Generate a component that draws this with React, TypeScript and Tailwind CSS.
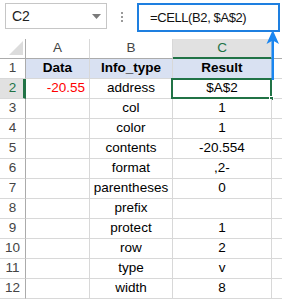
import React from "react";

const data: [string, string, string, string][] = [
  ["1", "Data", "Info_type", "Result"],
  ["2", "-20.55", "address", "$A$2"],
  ["3", "", "col", "1"],
  ["4", "", "color", "1"],
  ["5", "", "contents", "-20.554"],
  ["6", "", "format", ",2-"],
  ["7", "", "parentheses", "0"],
  ["8", "", "prefix", ""],
  ["9", "", "protect", "1"],
  ["10", "", "row", "2"],
  ["11", "", "type", "v"],
  ["12", "", "width", "8"],
];

export default function App() {
  return (
    <div
      className="relative w-[282px] h-[299px] overflow-hidden bg-white text-black"
      style={{ fontFamily: '"Liberation Sans", Arial, sans-serif' }}
    >
      {/* Top bar */}
      <div className="flex items-start h-[39px] pt-[3px]">
        <div className="ml-[5px] w-[102px] h-[26px] border border-[#c6c6c6] flex items-center justify-between pl-[6px] pr-[5px]">
          <span className="text-[14px] text-[#222]">C2</span>
          <svg width="9" height="5" viewBox="0 0 9 5">
            <polygon points="0,0 9,0 4.5,5" fill="#7a7a7a" />
          </svg>
        </div>
        <div className="w-[30px] h-[28px] flex flex-col items-center justify-center gap-[2px]">
          <div className="w-[2px] h-[2px] bg-[#9a9a9a]" />
          <div className="w-[2px] h-[2px] bg-[#9a9a9a]" />
          <div className="w-[2px] h-[2px] bg-[#9a9a9a]" />
        </div>
        <div className="w-[143px] h-[29px] border-2 border-[#1e7fe0] flex items-center pl-[11px]">
          <span className="text-[13px] tracking-[-0.4px] text-[#111]">=CELL(B2, $A$2)</span>
        </div>
      </div>

      {/* Sheet grid */}
      <div className="grid grid-cols-[26px_64px_83px_99px_1fr] text-[13.5px]">
        {/* Column headers */}
        <div className="h-[20px] border-r border-b border-[#ababab] flex items-end justify-end pr-[2px] pb-[3px]">
          <svg width="14" height="14" viewBox="0 0 14 14">
            <polygon points="14,0 14,14 0,14" fill="#dcdcdc" />
          </svg>
        </div>
        <div className="h-[20px] border-r border-b border-r-[#d8d8d8] border-b-[#ababab] flex items-center justify-center text-[#444]">A</div>
        <div className="h-[20px] border-r border-b border-r-[#d8d8d8] border-b-[#ababab] flex items-center justify-center text-[#444]">B</div>
        <div className="h-[20px] border-r border-r-[#d8d8d8] border-b-2 border-b-[#217346] bg-[#e1e1e1] flex items-center justify-center text-[#217346]">C</div>
        <div className="h-[20px] border-b border-[#ababab]" />

        {data.map(([n, a, b, c]) => {
          const isHeader = n === "1";
          const isSel = n === "2";
          const rowBg = isHeader ? "bg-[#d9e1f2]" : "bg-white";
          return (
            <React.Fragment key={n}>
              <div
                className={
                  isSel
                    ? "h-[20px] bg-[#e1e1e1] border-r-[3px] border-r-[#217346] border-b border-b-[#d8d8d8] flex items-center justify-center pl-[2px] text-[#217346]"
                    : "h-[20px] border-r border-r-[#ababab] border-b border-b-[#d8d8d8] flex items-center justify-center text-[#444]"
                }
              >
                {n}
              </div>
              <div
                className={`h-[20px] border-r border-b border-[#d8d8d8] ${rowBg} flex items-center ${
                  isHeader ? "justify-center font-bold" : "justify-end pr-[4px] text-[#ff0000]"
                }`}
              >
                {a}
              </div>
              <div
                className={`h-[20px] border-r border-b border-[#d8d8d8] ${rowBg} flex items-center justify-center whitespace-nowrap ${
                  isHeader ? "font-bold" : ""
                }`}
              >
                {b}
              </div>
              <div
                className={`relative h-[20px] border-r border-b border-[#d8d8d8] ${rowBg} flex items-center justify-center ${
                  isHeader ? "font-bold" : ""
                }`}
              >
                {c}
                {isSel && (
                  <>
                    <div className="absolute -left-[2px] -top-[1px] -right-[1px] -bottom-[1px] border-2 border-[#217346]" />
                    <div className="absolute -right-[3px] -bottom-[3px] w-[5px] h-[5px] bg-[#217346] border border-white" />
                  </>
                )}
              </div>
              <div className="h-[20px] border-b border-[#d8d8d8]" />
            </React.Fragment>
          );
        })}
      </div>

      {/* Blue arrow */}
      <svg
        className="absolute left-[266px] top-[30px]"
        width="14"
        height="50"
        viewBox="0 0 14 50"
      >
        <rect x="5.5" y="10" width="2.5" height="40" fill="#1a86f0" />
        <polygon points="6.75,0 13,14 6.75,10.5 0.5,14" fill="#1a86f0" />
      </svg>
    </div>
  );
}
